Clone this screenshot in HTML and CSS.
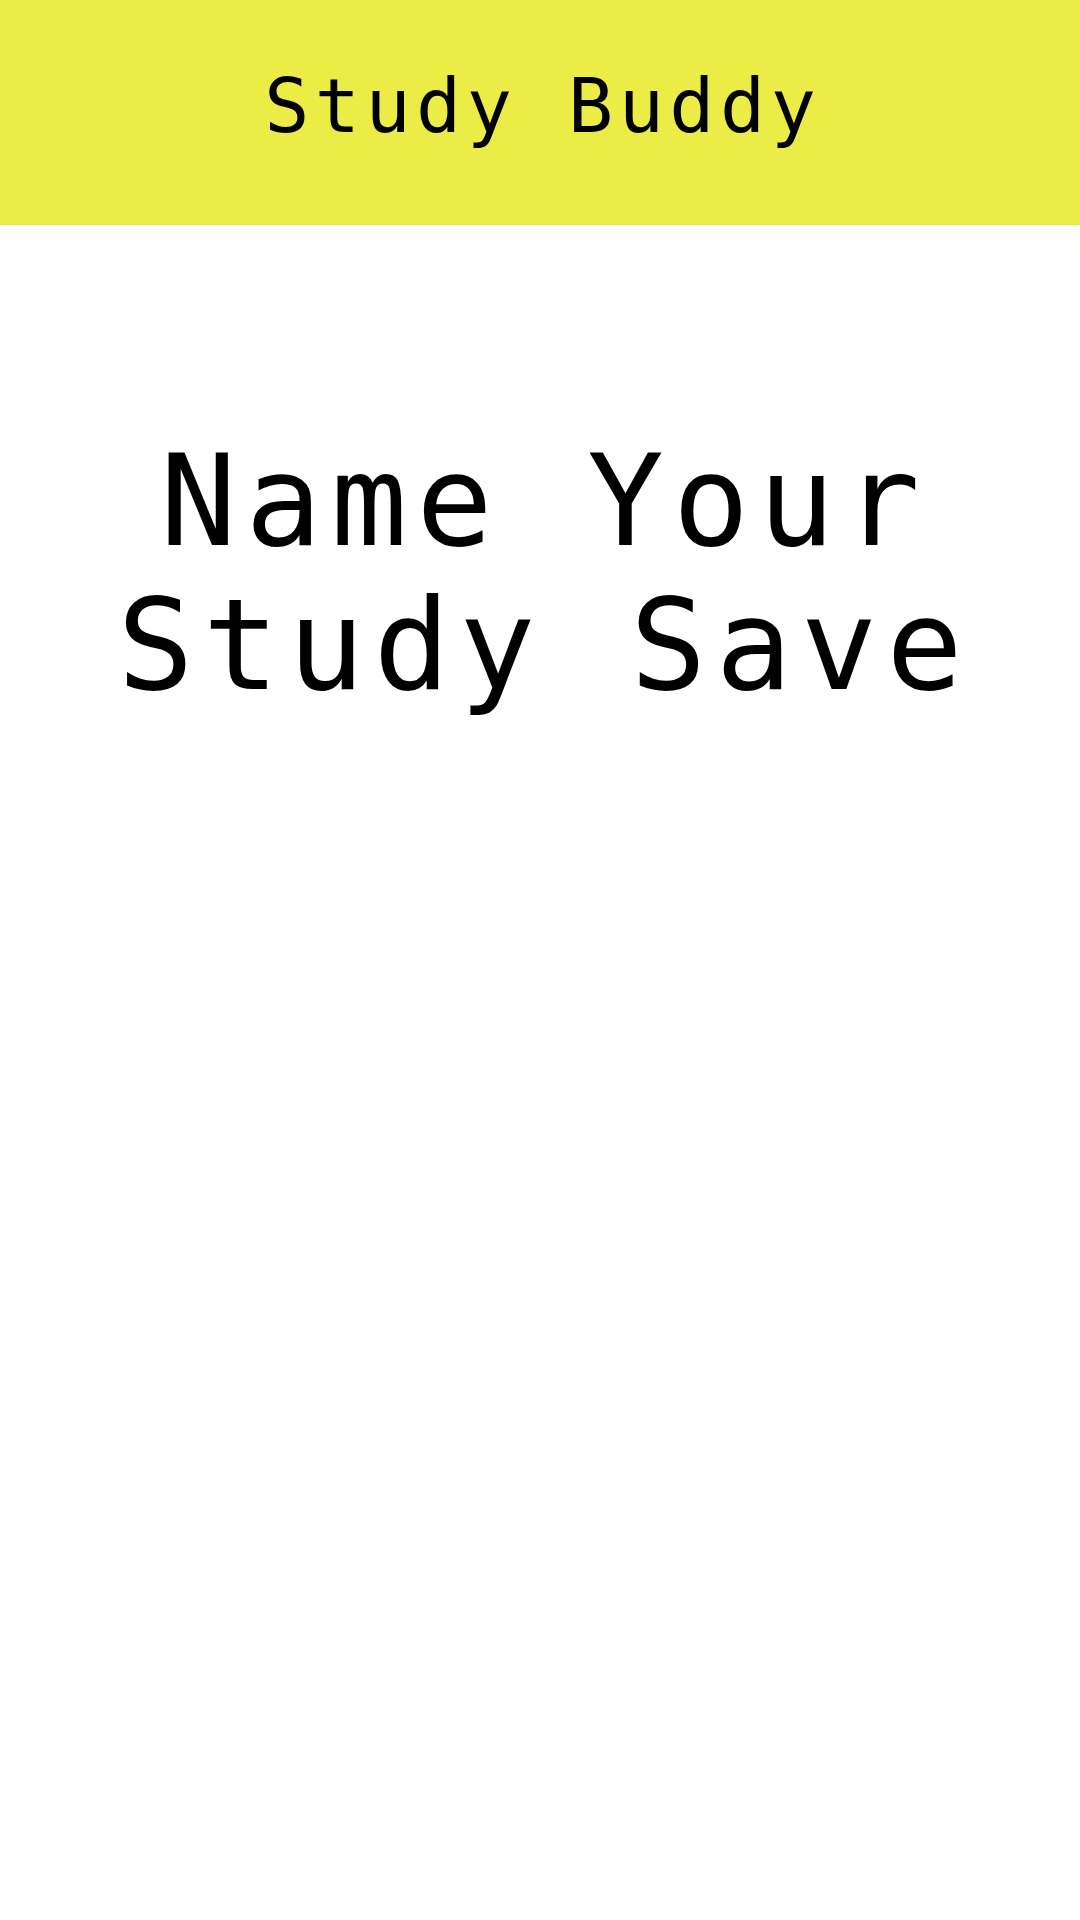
FILE: index.html
```html
<!DOCTYPE html>
<html lang="en">
<head>
<meta charset="utf-8">
<title>Study Buddy</title>
<link rel="stylesheet" href="styles.css">
</head>
<body>
<header class="topbar">
  <h1 class="brand">Study Buddy</h1>
</header>
<main class="content">
  <h2 class="heading">Name Your<br>Study Save</h2>
</main>
</body>
</html>
```
FILE: styles.css
```css
html, body {
  margin: 0;
  padding: 0;
  background: #ffffff;
  font-family: "DejaVu Sans Mono", "Liberation Mono", monospace;
  color: #000;
}
.topbar {
  height: 225px;
  background: #ecec46;
  display: flex;
  align-items: center;
  justify-content: center;
}
.brand {
  margin: 0;
  font-size: 75px;
  font-weight: normal;
  letter-spacing: 5.5px;
  line-height: 1;
  padding: 0 0 12px 5.5px;
}
.content {
  display: flex;
  justify-content: center;
}
.heading {
  margin: 204px 0 0;
  font-size: 127px;
  font-weight: normal;
  line-height: 144px;
  letter-spacing: 9px;
  padding-left: 9px;
  text-align: center;
}
```
